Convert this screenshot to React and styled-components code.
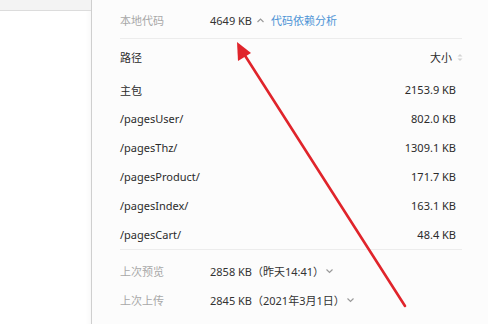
import React from 'react';
import styled, { createGlobalStyle } from 'styled-components';

const Global = createGlobalStyle`
  html, body {
    margin: 0;
    padding: 0;
    background: #fff;
  }
  body {
    font-family: "Segoe UI", "Noto Sans", "Noto Sans CJK SC", sans-serif;
    font-size: 11px;
    color: #333;
  }
`;

const Page = styled.div`
  position: relative;
  display: flex;
  width: 488px;
  height: 324px;
  overflow: hidden;
`;

const Sidebar = styled.div`
  width: 91px;
  flex: none;
  background: #fff;
  border-right: 1px solid #cfcfcf;
  box-shadow: inset -6px 0 6px -6px rgba(0, 0, 0, 0.06);
`;

const SidebarTop = styled.div`
  height: 10px;
  background: #f3f3f3;
  border-bottom: 1px solid #dcdcdc;
`;

const Main = styled.div`
  flex: 1;
  background: #fcfcfc;
  padding: 0 26px 0 28px;
`;

const InfoRow = styled.div`
  display: flex;
  align-items: center;
  height: ${(p) => p.h || 29}px;
  padding-top: ${(p) => p.pt || 0}px;
  box-sizing: border-box;
`;

const Label = styled.span`
  width: 90px;
  flex: none;
  color: #a8a8a8;
`;

const Value = styled.span`
  color: #333;
  white-space: pre;
`;

const Link = styled.span`
  color: #4d94d6;
  margin-left: 6px;
`;

const Chevron = styled.svg`
  width: 9px;
  height: 9px;
  margin-left: ${(p) => p.ml || 6}px;
  flex: none;
`;

const Divider = styled.div`
  height: 1px;
  background: #ececec;
`;

const Table = styled.div`
  display: flex;
  flex-direction: column;
`;

const Row = styled.div`
  display: flex;
  align-items: center;
  justify-content: space-between;
  height: ${(p) => (p.head ? 36 : 29)}px;
  padding-right: 6px;
  color: #2b2b2b;
`;

const Size = styled.span`
  display: flex;
  align-items: center;
`;

const SortIcon = styled.svg`
  width: 6px;
  height: 9px;
  margin-left: 5px;
  margin-right: -7px;
`;

const Arrow = styled.svg`
  position: absolute;
  left: 0;
  top: 0;
  width: 488px;
  height: 324px;
  pointer-events: none;
`;

const up = 'M1.5 6 L4.5 3 L7.5 6';
const down = 'M1.5 3.5 L4.5 6.5 L7.5 3.5';

const rows = [
  ['主包', '2153.9 KB'],
  ['/pagesUser/', '802.0 KB'],
  ['/pagesThz/', '1309.1 KB'],
  ['/pagesProduct/', '171.7 KB'],
  ['/pagesIndex/', '163.1 KB'],
  ['/pagesCart/', '48.4 KB'],
];

function Caret({ d, ml }) {
  return (
    <Chevron viewBox="0 0 9 9" ml={ml}>
      <path d={d} fill="none" stroke="#9a9a9a" strokeWidth="1.2" />
    </Chevron>
  );
}

export default function App() {
  return (
    <Page>
      <Global />
      <Sidebar>
        <SidebarTop />
      </Sidebar>
      <Main>
        <InfoRow h={38} pt={2}>
          <Label>本地代码</Label>
          <Value>4649 KB</Value>
          <Caret d={up} ml={4} />
          <Link>代码依赖分析</Link>
        </InfoRow>
        <Divider />
        <Table>
          <Row head>
            <span>路径</span>
            <Size>
              大小
              <SortIcon viewBox="0 0 6 9">
                <path d="M0.5 3.5 L3 1 L5.5 3.5 Z" fill="#d4d4d4" />
                <path d="M0.5 5.5 L3 8 L5.5 5.5 Z" fill="#d4d4d4" />
              </SortIcon>
            </Size>
          </Row>
          {rows.map(([path, size]) => (
            <Row key={path}>
              <span>{path}</span>
              <span>{size}</span>
            </Row>
          ))}
        </Table>
        <Divider />
        <InfoRow pt={6} h={35}>
          <Label>上次预览</Label>
          <Value>2858 KB（昨天14:41）</Value>
          <Caret d={down} ml={1} />
        </InfoRow>
        <InfoRow>
          <Label>上次上传</Label>
          <Value>2845 KB（2021年3月1日）</Value>
          <Caret d={down} ml={1} />
        </InfoRow>
      </Main>
      <Arrow viewBox="0 0 488 324">
        <line x1="405" y1="306" x2="244" y2="54" stroke="#e0242b" strokeWidth="2.6" strokeLinecap="round" />
        <polygon points="237,42 251,53 238,61" fill="#e0242b" />
      </Arrow>
    </Page>
  );
}
